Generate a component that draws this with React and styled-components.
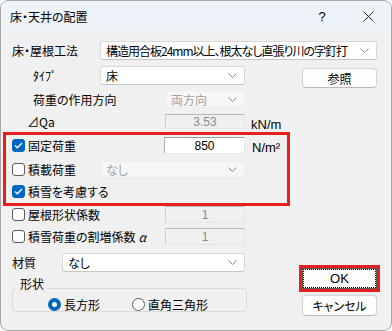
import React from 'react'
import styled, { createGlobalStyle } from 'styled-components'

const GlobalStyle = createGlobalStyle`
  html, body { margin: 0; padding: 0; background: #ffffff; }
  body {
    font-family: "Noto Sans CJK JP", "Noto Sans", sans-serif;
    font-size: 12px;
    font-feature-settings: "palt";
    color: #000;
  }
  * { box-sizing: border-box; }
`

const Window = styled.div`
  width: 392px;
  height: 331px;
  border: 1px solid #a8a8a8;
  border-radius: 8px;
  overflow: hidden;
  background: #f0f0f0;
  display: flex;
  flex-direction: column;
`

const TitleBar = styled.div`
  height: 30px;
  flex: none;
  background: #eef2f9;
  display: flex;
  align-items: center;
  padding-left: 9px;
  font-size: 12px;
`

const TitleText = styled.span`
  flex: 1;
`

const TitleIcon = styled.span`
  width: 46px;
  display: flex;
  justify-content: center;
  font-size: 13px;
  font-family: "Segoe UI", "Liberation Sans", sans-serif;
`

const Body = styled.div`
  padding-top: 10px;
  display: flex;
  flex-direction: column;
`

const Row = styled.div`
  display: flex;
  align-items: center;
  height: ${p => p.h}px;
  margin-top: ${p => p.mt || 0}px;
  padding-left: ${p => p.pl || 0}px;
  white-space: nowrap;
`

const Label = styled.span`
  width: ${p => p.w}px;
  flex: none;
`

const Combo = styled.div`
  width: ${p => p.w}px;
  height: 100%;
  flex: none;
  display: flex;
  align-items: center;
  padding: 0 7px 0 5px;
  background: ${p => (p.disabled ? '#f6f6f6' : '#ffffff')};
  border: 1px solid ${p => (p.disabled ? '#ececec' : '#d8d8d8')};
  border-bottom-color: ${p => (p.disabled ? '#ececec' : '#c4c4c4')};
  border-radius: 3px;
  color: ${p => (p.disabled ? '#a2a2a2' : '#000')};
`

const ComboText = styled.span`
  flex: 1;
  overflow: hidden;
  letter-spacing: ${p => (p.tight ? '-1px' : 'normal')};
`

const Edit = styled.div`
  width: ${p => p.w}px;
  height: 100%;
  flex: none;
  display: flex;
  align-items: center;
  justify-content: center;
  background: ${p => (p.disabled ? '#f0f0f0' : '#ffffff')};
  border: 1px solid ${p => (p.disabled ? '#e4e4e4' : '#e6e6e6')};
  border-top-color: ${p => (p.disabled ? '#b8b8b8' : '#9a9a9a')};
  border-left-color: ${p => (p.disabled ? '#cfcfcf' : '#b0b0b0')};
  color: ${p => (p.disabled ? '#8a8a8a' : '#000')};
  font-family: "Liberation Sans", sans-serif;
  font-size: 12px;
`

const Unit = styled.span`
  margin-left: ${p => p.ml}px;
  margin-top: ${p => p.mt || 0}px;
  font-family: "Liberation Sans", sans-serif;
  font-size: 13px;
`

const Main = styled.div`
  display: flex;
  margin-top: 6px;
`

const LeftCol = styled.div`
  width: 290px;
  display: flex;
  flex-direction: column;
`

const RightCol = styled.div`
  margin-left: 11px;
  display: flex;
  flex-direction: column;
`

const Highlight = styled.div`
  margin-top: ${p => p.mt}px;
  margin-left: 2px;
  width: 287px;
  height: 74px;
  border: 3px solid #e3201e;
`

const CheckLabel = styled.label`
  width: ${p => p.w}px;
  flex: none;
  display: flex;
  align-items: center;
  gap: 3px;
`

const Box = styled.span`
  width: 13px;
  height: 13px;
  flex: none;
  border-radius: 3px;
  display: flex;
  align-items: center;
  justify-content: center;
  background: ${p => (p.checked ? '#0067c0' : '#ffffff')};
  border: 1px solid ${p => (p.checked ? '#0067c0' : '#5c5c5c')};
`

const Group = styled.fieldset`
  margin: 4px 0 0 11px;
  width: 235px;
  height: 36px;
  padding: 0;
  border: 1px solid #dadada;
  border-radius: 3px;
  display: flex;
  align-items: center;
`

const Legend = styled.legend`
  padding: 0 3px 8px 4px;
  margin-left: 3px;
  line-height: 16px;
`

const Radio = styled.label`
  display: flex;
  align-items: center;
  gap: 3px;
  margin-top: -4px;
  margin-left: ${p => p.ml}px;
  width: ${p => p.w}px;
  flex: none;
`

const RadioDot = styled.span`
  width: 13px;
  height: 13px;
  border-radius: 50%;
  flex: none;
  background: #ffffff;
  border: ${p => (p.checked ? '4px solid #0067c0' : '1px solid #5c5c5c')};
`

const Button = styled.div`
  width: 75px;
  height: ${p => p.h || 21}px;
  margin-top: ${p => p.mt || 0}px;
  display: flex;
  align-items: center;
  justify-content: center;
  background: #fdfdfd;
  border: 1px solid #d2d2d2;
  border-bottom-color: #b8b8b8;
  border-radius: 4px;
`

const FocusRing = styled.div`
  margin-top: ${p => p.mt}px;
  margin-left: -3px;
  width: 81px;
  height: 27px;
  border: 3px solid #e3201e;
`

const DefaultButton = styled.div`
  width: 75px;
  height: 21px;
  display: flex;
  align-items: center;
  justify-content: center;
  background: #fdfdfd;
  border: 1px solid #5a5a5a;
  outline: 1px dotted #000;
  outline-offset: -2px;
  font-family: "Liberation Sans", sans-serif;
  font-size: 13px;
`

const Chevron = () => (
  <svg width="9" height="5" viewBox="0 0 9 5">
    <polyline points="0.5,0.5 4.5,4.5 8.5,0.5" fill="none" stroke="#8a8a8a" strokeWidth="1" />
  </svg>
)

const Check = ({ checked, children, w }) => (
  <CheckLabel w={w}>
    <Box checked={checked}>
      {checked && (
        <svg width="9" height="7" viewBox="0 0 9 7">
          <polyline points="1,3.5 3.3,5.8 8,1" fill="none" stroke="#fff" strokeWidth="1.3" />
        </svg>
      )}
    </Box>
    {children}
  </CheckLabel>
)

const CloseIcon = () => (
  <svg width="11" height="11" viewBox="0 0 11 11">
    <path d="M0.5 0.5 L10.5 10.5 M10.5 0.5 L0.5 10.5" stroke="#222" strokeWidth="1" />
  </svg>
)

const App = () => (
  <>
    <GlobalStyle />
    <Window>
      <TitleBar>
        <TitleText>床・天井の配置</TitleText>
        <TitleIcon>?</TitleIcon>
        <TitleIcon><CloseIcon /></TitleIcon>
      </TitleBar>
      <Body>
        <Row h={19} pl={11}>
          <Label w={88}>床・屋根工法</Label>
          <Combo w={277}>
            <ComboText tight>構造用合板24mm以上、根太なし直張り川の字釘打</ComboText>
            <Chevron />
          </Combo>
        </Row>
        <Main>
          <LeftCol>
            <Row h={19} pl={32}>
              <Label w={67}>ﾀｲﾌﾟ</Label>
              <Combo w={145}>
                <ComboText>床</ComboText>
                <Chevron />
              </Combo>
            </Row>
            <Row h={18} mt={5} pl={32}>
              <Label w={132}>荷重の作用方向</Label>
              <Combo w={80} disabled>
                <ComboText>両方向</ComboText>
                <Chevron />
              </Combo>
            </Row>
            <Row h={15} mt={6} pl={26}>
              <Label w={138}>⊿Qa</Label>
              <Edit w={80} disabled>3.53</Edit>
              <Unit ml={6} mt={6}>kN/m</Unit>
            </Row>
            <Highlight mt={3}>
              <Row h={17} mt={2} pl={6}>
                <Check checked w={152}>固定荷重</Check>
                <Edit w={81}>850</Edit>
                <Unit ml={7} mt={4}>N/m²</Unit>
              </Row>
              <Row h={17} mt={7} pl={6}>
                <Check w={88}>積載荷重</Check>
                <Combo w={145} disabled>
                  <ComboText>なし</ComboText>
                  <Chevron />
                </Combo>
              </Row>
              <Row h={18} mt={4} pl={6}>
                <Check checked w={200}>積雪を考慮する</Check>
              </Row>
            </Highlight>
            <Row h={17} mt={0} pl={11}>
              <Check w={153}>屋根形状係数</Check>
              <Edit w={80} disabled>1</Edit>
            </Row>
            <Row h={17} mt={5} pl={11}>
              <Check w={153}>積雪荷重の割増係数<i>α</i></Check>
              <Edit w={80} disabled>1</Edit>
            </Row>
            <Row h={19} mt={8} pl={11}>
              <Label w={50}>材質</Label>
              <Combo w={183}>
                <ComboText>なし</ComboText>
                <Chevron />
              </Combo>
            </Row>
            <Group>
              <Legend>形状</Legend>
              <Radio ml={35} w={84}><RadioDot checked />長方形</Radio>
              <Radio ml={0} w={100}><RadioDot />直角三角形</Radio>
            </Group>
          </LeftCol>
          <RightCol>
            <Button mt={2} h={20}>参照</Button>
            <FocusRing mt={177}>
              <DefaultButton>OK</DefaultButton>
            </FocusRing>
            <Button mt={3}>キャンセル</Button>
          </RightCol>
        </Main>
      </Body>
    </Window>
  </>
)

export default App
